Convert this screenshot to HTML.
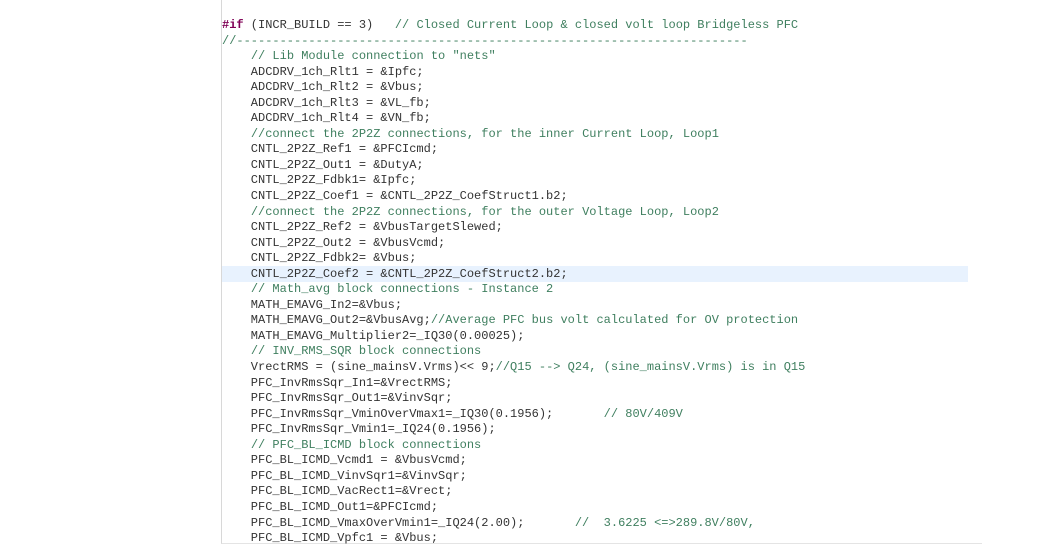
<!DOCTYPE html>
<html><head><meta charset="utf-8"><style>
html,body{margin:0;padding:0;background:#fff;width:1060px;height:545px;overflow:hidden}
.ed{position:absolute;left:221px;top:0;width:760px;height:543px;border-left:1px solid #d8d8d8;border-bottom:1px solid #e4e4e4}
pre{position:absolute;left:222px;top:18px;margin:0;font-family:"Liberation Mono",monospace;font-size:12px;line-height:15.55px;color:#333;white-space:pre}
.c{color:#3f7f5f}.k{color:#7f0055;font-weight:bold}
.hl{position:absolute;left:222px;top:266px;width:746px;height:16px;background:#e8f2fe}
</style></head><body>
<div class="ed"></div><div class="hl"></div>
<pre><span class="k">#if</span> (INCR_BUILD == 3)   <span class="c">// Closed Current Loop &amp; closed volt loop Bridgeless PFC</span>
<span class="c">//-----------------------------------------------------------------------</span>
    <span class="c">// Lib Module connection to "nets"</span>
    ADCDRV_1ch_Rlt1 = &amp;Ipfc;
    ADCDRV_1ch_Rlt2 = &amp;Vbus;
    ADCDRV_1ch_Rlt3 = &amp;VL_fb;
    ADCDRV_1ch_Rlt4 = &amp;VN_fb;
    <span class="c">//connect the 2P2Z connections, for the inner Current Loop, Loop1</span>
    CNTL_2P2Z_Ref1 = &amp;PFCIcmd;
    CNTL_2P2Z_Out1 = &amp;DutyA;
    CNTL_2P2Z_Fdbk1= &amp;Ipfc;
    CNTL_2P2Z_Coef1 = &amp;CNTL_2P2Z_CoefStruct1.b2;
    <span class="c">//connect the 2P2Z connections, for the outer Voltage Loop, Loop2</span>
    CNTL_2P2Z_Ref2 = &amp;VbusTargetSlewed;
    CNTL_2P2Z_Out2 = &amp;VbusVcmd;
    CNTL_2P2Z_Fdbk2= &amp;Vbus;
    CNTL_2P2Z_Coef2 = &amp;CNTL_2P2Z_CoefStruct2.b2;
    <span class="c">// Math_avg block connections - Instance 2</span>
    MATH_EMAVG_In2=&amp;Vbus;
    MATH_EMAVG_Out2=&amp;VbusAvg;<span class="c">//Average PFC bus volt calculated for OV protection</span>
    MATH_EMAVG_Multiplier2=_IQ30(0.00025);
    <span class="c">// INV_RMS_SQR block connections</span>
    VrectRMS = (sine_mainsV.Vrms)&lt;&lt; 9;<span class="c">//Q15 --&gt; Q24, (sine_mainsV.Vrms) is in Q15</span>
    PFC_InvRmsSqr_In1=&amp;VrectRMS;
    PFC_InvRmsSqr_Out1=&amp;VinvSqr;
    PFC_InvRmsSqr_VminOverVmax1=_IQ30(0.1956);       <span class="c">// 80V/409V</span>
    PFC_InvRmsSqr_Vmin1=_IQ24(0.1956);
    <span class="c">// PFC_BL_ICMD block connections</span>
    PFC_BL_ICMD_Vcmd1 = &amp;VbusVcmd;
    PFC_BL_ICMD_VinvSqr1=&amp;VinvSqr;
    PFC_BL_ICMD_VacRect1=&amp;Vrect;
    PFC_BL_ICMD_Out1=&amp;PFCIcmd;
    PFC_BL_ICMD_VmaxOverVmin1=_IQ24(2.00);       <span class="c">//  3.6225 &lt;=&gt;289.8V/80V,</span>
    PFC_BL_ICMD_Vpfc1 = &amp;Vbus;</pre>
</body></html>
